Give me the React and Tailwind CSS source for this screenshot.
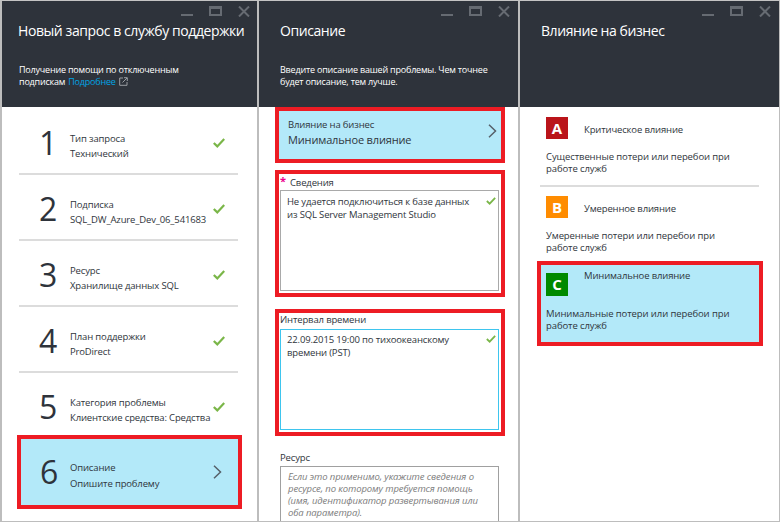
const font = { fontFamily: '"Open Sans","Noto Sans",sans-serif' };

function Check({ className = "", w = 12, h = 10 }) {
  return (
    <svg width={w} height={h} viewBox="0 0 12 10" className={className} fill="none">
      <path d="M0.8 5 L4.3 8.4 L11.2 1" stroke="#7ab648" strokeWidth="2.2" />
    </svg>
  );
}

function Chevron({ className = "" }) {
  return (
    <svg width="9" height="14" viewBox="0 0 9 14" fill="none" className={className}>
      <path d="M1 0.8 L7.5 7 L1 13.2" stroke="#566069" strokeWidth="1.5" />
    </svg>
  );
}

function Controls({ pr }) {
  return (
    <div className={`flex justify-end items-start h-[20px] pt-[5px] gap-[16px] ${pr}`}>
      <div className="w-[12px] h-[2px] bg-[#666b72] mt-[8px]" />
      <div className="w-[13px] h-[10px] border-2 border-t-[3px] border-[#666b72]" />
      <svg width="12" height="11" viewBox="0 0 12 11" fill="none">
        <path d="M1 0.5 L11 10.5 M11 0.5 L1 10.5" stroke="#666b72" strokeWidth="2" />
      </svg>
    </div>
  );
}

function Header({ title, children, pl, pr }) {
  return (
    <div className={`h-[106px] bg-[#2e333b] text-white shrink-0 ${pl}`}>
      <Controls pr={pr} />
      <div className="text-[14px] leading-[22px] h-[44px] tracking-[-0.42px] whitespace-nowrap mt-[-1px]">{title}</div>
      <div className="text-[9px] leading-[11.5px] tracking-[-0.2px] whitespace-nowrap">{children}</div>
    </div>
  );
}

function Step({ n, a, b, last }) {
  return (
    <div className={`ml-[17px] mr-[19px] flex items-start pl-[20px] pr-[13px] text-[#2f353c] ${last ? "h-[62px]" : "h-[66px] border-b-2 border-[#dcdcdc]"}`}>
      <div className="w-[31px] shrink-0 text-[32px] leading-[33px] text-[#2e333b] pt-[17px]">{n}</div>
      <div className="flex-1 text-[9.5px] leading-[15px] whitespace-nowrap pt-[22px] tracking-[-0.15px]">
        <div>{a}</div>
        <div>{b}</div>
      </div>
      <Check className="mt-[29px] shrink-0" />
    </div>
  );
}

function Impact({ letter, color, title, text, sep, h }) {
  return (
    <div className={`ml-[20px] w-[219px] px-[6px] ${h} ${sep ? "border-b-2 border-[#dcdcdc]" : ""}`}>
      <div className="flex items-center gap-[16px]">
        <div className={`w-[22px] h-[22px] flex items-center justify-center text-white font-bold text-[15px] ${color}`}>{letter}</div>
        <div className="text-[9.5px] text-[#2f353c] mt-[4px] tracking-[-0.15px]">{title}</div>
      </div>
      <div className="mt-[12px] text-[9.5px] leading-[12px] text-[#2f353c] tracking-[-0.1px] whitespace-nowrap">{text}</div>
    </div>
  );
}

export default function App() {
  return (
    <div style={font} className="w-[780px] h-[522px] overflow-hidden flex bg-white border-t border-[#c4c4c4]">
      {/* Panel 1 */}
      <div className="w-[259px] h-[521px] shrink-0 border-x-2 border-b border-[#bdbdbd] flex flex-col overflow-hidden">
        <Header title="Новый запрос в службу поддержки" pl="pl-[16px]" pr="pr-[7px]">
          <div className="pl-[1px]">Получение помощи по отключенным</div>
          <div className="pl-[1px] flex items-center gap-[3px]">
            подпискам <span className="text-[#00a4e4]">Подробнее</span>
            <svg width="9" height="9" viewBox="0 0 9 9" fill="none">
              <path d="M4 1 H0.7 V8.3 H8 V5 M3.5 5.5 L8 1 M5 0.7 H8.3 V4" stroke="#9a9ea3" strokeWidth="1" />
            </svg>
          </div>
        </Header>
        <div className="pt-[2px]">
          <Step n="1" a="Тип запроса" b="Технический" />
          <Step n="2" a="Подписка" b="SQL_DW_Azure_Dev_06_541683" />
          <Step n="3" a="Ресурс" b="Хранилище данных SQL" />
          <Step n="4" a="План поддержки" b="ProDirect" />
          <Step n="5" a="Категория проблемы" b="Клиентские средства: Средства" last />
        </div>
        <div className="ml-[15px] w-[225px] h-[74px] border-4 border-[#ed1c24] bg-[#b3e9f9] flex items-center pl-[19px] pr-[16px] text-[#2f353c]">
          <div className="w-[30px] shrink-0 text-[32px] leading-none text-[#2e333b]">6</div>
          <div className="flex-1 text-[9.5px] leading-[16px] whitespace-nowrap pt-[8px] tracking-[-0.15px]">
            <div>Описание</div>
            <div>Опишите проблему</div>
          </div>
          <Chevron />
        </div>
      </div>

      {/* Panel 2 */}
      <div className="w-[261px] h-[521px] shrink-0 border-r-2 border-b border-[#bdbdbd] flex flex-col overflow-hidden">
        <Header title="Описание" pl="pl-[21px]" pr="pr-[8px]">
          <div>Введите описание вашей проблемы. Чем точнее</div>
          <div>будет описание, тем лучше.</div>
        </Header>
        <div className="ml-[16px] w-[230px]">
          <div className="h-[56px] border-4 border-[#ed1c24] bg-[#b3e9f9] flex items-center pl-[9px] pr-[4px] pb-[8px] text-[#2f353c]">
            <div className="flex-1 whitespace-nowrap mt-[3px]">
              <div className="text-[9.5px] leading-[14px] tracking-[-0.15px]">Влияние на бизнес</div>
              <div className="text-[11px] leading-[16px] tracking-[-0.15px]">Минимальное влияние</div>
            </div>
            <Chevron />
          </div>
          <div className="mt-[7px] h-[127px] border-4 border-[#ed1c24] bg-white pl-[1px] pr-[2px]">
            <div className="h-[16px] flex text-[9.5px] leading-[17px] text-[#2f353c] tracking-[-0.15px]">
              <span className="text-[#ec008c] text-[11px] leading-[13px] font-bold w-[10px]">*</span>Сведения
            </div>
            <div className="h-[101px] border border-[#a9a9a9] flex items-start pl-[6px] pr-[2px] pt-[4px] text-[9.5px] leading-[13px] text-[#2f353c] tracking-[-0.15px]">
              <div className="flex-1 whitespace-nowrap">Не удается подключиться к базе данных<br />из SQL Server Management Studio</div>
              <Check w={10} h={8} className="mt-[2px] shrink-0" />
            </div>
          </div>
          <div className="mt-[12px] h-[127px] border-4 border-[#ed1c24] bg-white pl-[1px] pr-[2px]">
            <div className="h-[16px] text-[9.5px] leading-[14px] text-[#2f353c] tracking-[-0.15px]">Интервал времени</div>
            <div className="h-[101px] border border-[#3ec5ee] flex items-start pl-[6px] pr-[2px] pt-[3px] text-[9.5px] leading-[13px] text-[#2f353c] tracking-[-0.15px]">
              <div className="flex-1 whitespace-nowrap">22.09.2015 19:00 по тихоокеанскому<br />времени (PST)</div>
              <Check w={10} h={8} className="mt-[2px] shrink-0" />
            </div>
          </div>
          <div className="mt-[14px] ml-[5px] h-[16px] text-[9.5px] leading-[16px] text-[#2f353c] tracking-[-0.15px]">Ресурс</div>
          <div className="ml-[5px] w-[219px] h-[80px] border border-[#a0a0a0] pl-[7px] pt-[4px] text-[9.5px] leading-[12px] italic text-[#7c7c7c] whitespace-nowrap tracking-[-0.1px]">
            Если это применимо, укажите сведения о<br />
            ресурсе, по которому требуется помощь<br />
            (имя, идентификатор развертывания или<br />
            оба параметра).
          </div>
        </div>
      </div>

      {/* Panel 3 */}
      <div className="flex-1 h-[521px] border-b border-r border-[#bdbdbd] flex flex-col overflow-hidden">
        <Header title="Влияние на бизнес" pl="pl-[21px]" pr="pr-[8px]" />
        <div className="pt-[10px]">
          <Impact letter="A" color="bg-[#ba141a]" title="Критическое влияние" text={<>Существенные потери или перебои при<br />работе служб</>} sep h="h-[70px]" />
          <div className="mt-[9px]">
            <Impact letter="B" color="bg-[#ff8c00]" title="Умеренное влияние" text={<>Умеренные потери или перебои при<br />работе служб</>} h="h-[65px]" />
          </div>
          <div className="ml-[17px] w-[226px] h-[85px] border-4 border-[#ed1c24] bg-[#b3e9f9] pl-[5px] pt-[8px] text-[#2f353c]">
            <div className="flex gap-[16px] items-start">
              <div className="w-[22px] h-[23px] flex items-center justify-center bg-[#008a00] text-white font-bold text-[15px]">C</div>
              <div className="text-[9.5px] leading-[12px] mt-[-3px] tracking-[-0.15px]">Минимальное влияние</div>
            </div>
            <div className="mt-[12px] text-[9.5px] leading-[12px] tracking-[-0.1px] whitespace-nowrap">Минимальные потери или перебои при<br />работе служб</div>
          </div>
        </div>
      </div>
    </div>
  );
}
